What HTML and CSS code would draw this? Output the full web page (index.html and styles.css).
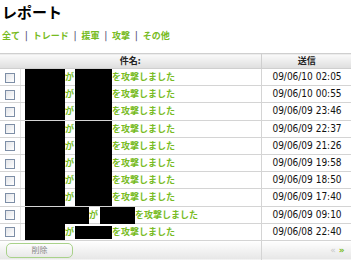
FILE: index.html
```html
<!DOCTYPE html>
<html>
<head>
  <meta charset="UTF-8">
  <title>レポート</title>
  <link rel="stylesheet" href="styles.css">
</head>
<body>
  <h1 class="pageTitle">レポート</h1>

  <div class="filters">
    <a href="#">全て</a><span class="sep">|</span><a href="#">トレード</a><span class="sep">|</span><a href="#">援軍</a><span class="sep">|</span><a href="#">攻撃</a><span class="sep">|</span><a href="#">その他</a>
  </div>

  <table class="reports">
    <thead>
      <tr>
        <th colspan="2">件名:</th>
        <th class="sent">送信</th>
      </tr>
    </thead>
    <tbody>
      <tr>
        <td class="check"><span class="box"></span></td>
        <td class="subject"><span class="redact w40"></span><a href="#">が</a><span class="redact w37 gapL"></span><a href="#">を攻撃しました</a></td>
        <td class="date">09/06/10 02:05</td>
      </tr>
      <tr>
        <td class="check"><span class="box"></span></td>
        <td class="subject"><span class="redact w40"></span><a href="#">が</a><span class="redact w37 gapL"></span><a href="#">を攻撃しました</a></td>
        <td class="date">09/06/10 00:55</td>
      </tr>
      <tr>
        <td class="check"><span class="box"></span></td>
        <td class="subject"><span class="redact w40"></span><a href="#">が</a><span class="redact w37 gapL"></span><a href="#">を攻撃しました</a></td>
        <td class="date">09/06/09 23:46</td>
      </tr>
      <tr>
        <td class="check"><span class="box"></span></td>
        <td class="subject"><span class="redact w40"></span><a href="#">が</a><span class="redact w37 gapL"></span><a href="#">を攻撃しました</a></td>
        <td class="date">09/06/09 22:37</td>
      </tr>
      <tr>
        <td class="check"><span class="box"></span></td>
        <td class="subject"><span class="redact w40"></span><a href="#">が</a><span class="redact w37 gapL"></span><a href="#">を攻撃しました</a></td>
        <td class="date">09/06/09 21:26</td>
      </tr>
      <tr>
        <td class="check"><span class="box"></span></td>
        <td class="subject"><span class="redact w40"></span><a href="#">が</a><span class="redact w37 gapL"></span><a href="#">を攻撃しました</a></td>
        <td class="date">09/06/09 19:58</td>
      </tr>
      <tr>
        <td class="check"><span class="box"></span></td>
        <td class="subject"><span class="redact w40"></span><a href="#">が</a><span class="redact w37 gapL"></span><a href="#">を攻撃しました</a></td>
        <td class="date">09/06/09 18:50</td>
      </tr>
      <tr>
        <td class="check"><span class="box"></span></td>
        <td class="subject"><span class="redact w40"></span><a href="#">が</a><span class="redact w37 gapL"></span><a href="#">を攻撃しました</a></td>
        <td class="date">09/06/09 17:40</td>
      </tr>
      <tr>
        <td class="check"><span class="box"></span></td>
        <td class="subject"><span class="redact w64"></span><a href="#">が</a><span class="redact w35 gapS"></span><a href="#">を攻撃しました</a></td>
        <td class="date">09/06/09 09:10</td>
      </tr>
      <tr>
        <td class="check"><span class="box"></span></td>
        <td class="subject"><span class="redact w40 last"></span><a href="#">が</a><span class="redact w37 gapL short"></span><a href="#">を攻撃しました</a></td>
        <td class="date">09/06/08 22:40</td>
      </tr>
    </tbody>
    <tfoot>
      <tr>
        <td colspan="2" class="actions"><button class="btnDelete">削除</button></td>
        <td class="pager"><span class="prev">&laquo;</span> <a href="#" class="next">&raquo;</a></td>
      </tr>
    </tfoot>
  </table>
</body>
</html>
```

FILE: styles.css
```css
body {
  margin: 0;
  font-family: "DejaVu Sans", "Noto Sans CJK JP", sans-serif;
  background-color: #fff;
  color: #000;
  overflow: hidden;
}

a {
  color: #77bb22;
  text-decoration: none;
}

.pageTitle {
  font-family: "Noto Sans CJK JP", sans-serif;
  font-size: 15px;
  font-weight: bold;
  line-height: 17px;
  margin: 3px 0 0 2px;
}

.filters {
  font-family: "Noto Sans CJK JP", sans-serif;
  font-size: 9px;
  font-weight: bold;
  line-height: 12px;
  margin: 10px 0 0 2px;
}

.filters .sep {
  color: #5a5a7a;
  margin: 0 5px;
}

/* テーブル */
.reports {
  width: 353px;
  margin-top: 11px;
  border-collapse: collapse;
  font-size: 9px;
  line-height: 12px;
}

.reports th {
  height: 14px;
  padding: 0;
  font-family: "Noto Sans CJK JP", sans-serif;
  font-size: 9px;
  font-weight: bold;
  color: #222;
  background: linear-gradient(#fafafa, #dedede);
  border: 1px solid #cfcfcf;
  border-left: none;
}

.reports td {
  height: 16.2px;
  padding: 0;
  border-bottom: 1px solid #d4d4d4;
  vertical-align: middle;
}

.reports .check {
  width: 20px;
  border-right: 1px solid #e4e4e4;
  text-align: center;
}

.box {
  display: inline-block;
  width: 8px;
  height: 8px;
  border: 1px solid #7d8ea6;
  background: linear-gradient(135deg, #e2e4e8, #fff);
  vertical-align: middle;
}

.subject {
  padding-left: 4px !important;
  font-family: "Noto Sans CJK JP", sans-serif;
  font-weight: bold;
  white-space: nowrap;
  line-height: 0;
}

.redact {
  display: inline-block;
  height: 16px;
  background: #000;
  box-shadow: 0 1px 0 #000;
  vertical-align: top;
}

.redact.short {
  height: 13px;
  margin-top: 2px;
  box-shadow: none;
}

.redact.last {
  box-shadow: none;
}

.w40 { width: 40px; }
.w37 { width: 37px; }
.w64 { width: 64px; }
.w35 { width: 35px; }

.gapL { margin-left: 1px; }
.gapS { margin-left: 2px; }

.subject a {
  vertical-align: top;
  line-height: 16px;
}

.date {
  width: 91px;
  border-left: 1px solid #d4d4d4;
  text-align: center;
  font-family: "DejaVu Sans Condensed", "DejaVu Sans", sans-serif;
  font-size: 10px;
  color: #111;
  white-space: nowrap;
}

.reports tfoot td {
  height: 19px;
  border-bottom: none;
  background: linear-gradient(#fff, #e6e6e6);
}

.actions {
  padding-left: 6px !important;
}

.btnDelete {
  display: block;
  width: 67px;
  height: 15px;
  padding: 0;
  border: 1px solid #a9d28a;
  border-radius: 5px;
  background: linear-gradient(#fdfdfd, #e9e9e9);
  font-family: "Noto Sans CJK JP", sans-serif;
  font-size: 8px;
  line-height: 12px;
  color: #888;
}

.pager {
  text-align: right;
  padding-right: 8px !important;
  font-size: 9px;
  border-left: 1px solid #d4d4d4;
}

.pager .prev {
  color: #c8c8c8;
}

.pager .next {
  color: #77bb22;
  font-weight: bold;
}
```
